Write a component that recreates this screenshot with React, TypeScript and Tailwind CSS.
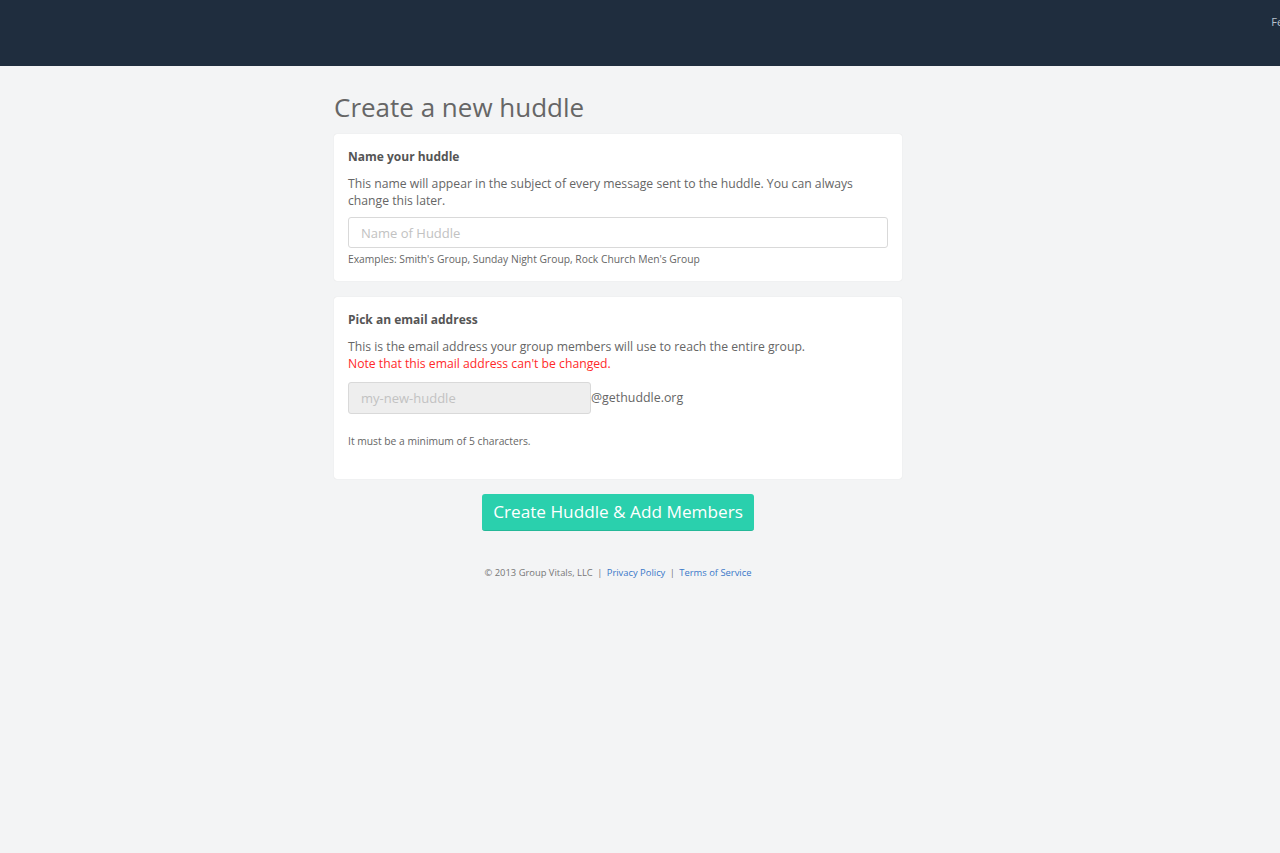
export default function App() {
  return (
    <div
      className="min-h-[853px] bg-[#f3f4f5] text-[#555]"
      style={{ fontFamily: '"Open Sans", "Liberation Sans", sans-serif' }}
    >
      {/* Top bar */}
      <header className="h-[66px] bg-[#1f2d3e] flex justify-end overflow-hidden">
        <span className="text-[11px] text-[#b8c2cf] pt-[14px] mr-[-40px] whitespace-nowrap">Feedback</span>
      </header>

      <main className="w-[568px] ml-[334px]">
        <h1 className="text-[26px] text-[#666] leading-[36px] mt-[23px] mb-[9px]">Create a new huddle</h1>

        {/* Name card */}
        <section className="bg-white rounded-[3px] shadow-[0_0_1px_rgba(0,0,0,0.15)] px-[14px] pt-[15px] pb-[15px]">
          <h2 className="text-[12px] font-bold text-[#555] leading-[16px]">Name your huddle</h2>
          <p className="text-[12.2px] leading-[17px] text-[#666] mt-[10px]">
            This name will appear in the subject of every message sent to the huddle. You can always change this later.
          </p>
          <input
            className="mt-[8px] w-full h-[31px] border border-[#d9d9d9] rounded-[3px] px-[12px] text-[13px] placeholder:text-[#c2c2c2] outline-none"
            placeholder="Name of Huddle"
          />
          <p className="text-[10.3px] leading-[14px] text-[#666] mt-[4px]">
            Examples: Smith's Group, Sunday Night Group, Rock Church Men's Group
          </p>
        </section>

        {/* Email card */}
        <section className="mt-[16px] bg-white rounded-[3px] shadow-[0_0_1px_rgba(0,0,0,0.15)] px-[14px] pt-[15px] pb-[31px]">
          <h2 className="text-[12px] font-bold text-[#555] leading-[16px]">Pick an email address</h2>
          <p className="text-[12.2px] leading-[17px] text-[#666] mt-[10px]">
            This is the email address your group members will use to reach the entire group.
            <br />
            <span className="text-[#ff2a2a]">Note that this email address can't be changed.</span>
          </p>
          <div className="mt-[10px] flex items-center">
            <input
              className="w-[243px] h-[32px] bg-[#eeeeee] border border-[#d9d9d9] rounded-[3px] px-[12px] text-[13px] placeholder:text-[#c2c2c2] outline-none"
              placeholder="my-new-huddle"
            />
            <span className="text-[12.4px] text-[#666]">@gethuddle.org</span>
          </div>
          <p className="text-[10.3px] leading-[14px] text-[#666] mt-[20px]">It must be a minimum of 5 characters.</p>
        </section>

        <div className="flex justify-center mt-[15px]">
          <button className="h-[37px] w-[272px] bg-[#2ad0ad] text-white text-[17.2px] rounded-[3px] border-b border-[#24b898]">
            Create Huddle &amp; Add Members
          </button>
        </div>

        <footer className="text-center text-[9.4px] text-[#777] mt-[35px]">
          © 2013 Group Vitals, LLC <span className="mx-[2px]">|</span>{" "}
          <a className="text-[#3a78c9]">Privacy Policy</a> <span className="mx-[2px]">|</span>{" "}
          <a className="text-[#3a78c9]">Terms of Service</a>
        </footer>
      </main>
    </div>
  );
}
